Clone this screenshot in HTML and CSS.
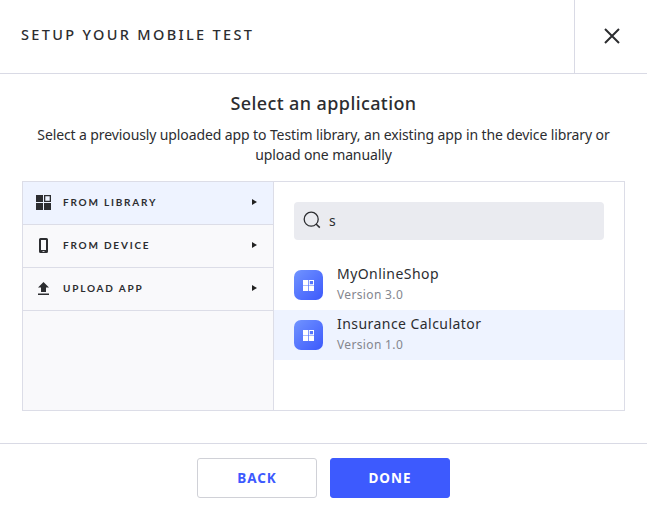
FILE: index.html
```html
<!DOCTYPE html>
<html lang="en">
<head>
<meta charset="utf-8">
<title>Setup your mobile test</title>
<link rel="stylesheet" href="styles.css">
</head>
<body>
<svg class="defs" width="0" height="0" aria-hidden="true">
  <symbol id="tiles" viewBox="0 0 15 15">
    <path fill="currentColor" fill-rule="evenodd" d="M0 0h7v7H0zM8 0h7v7H8zM9.3 1.3v4.4h4.4V1.3zM0 8h7v7H0zM8 8h7v7H8z"/>
  </symbol>
</svg>
<div class="dialog">
  <header class="header">
    <h1 class="heading"><span>SETUP YOUR MOBILE TEST</span></h1>
    <button class="close" aria-label="Close">
      <svg width="16" height="16" viewBox="0 0 16 16"><path d="M1 1l14 14M15 1L1 15" stroke="currentColor" stroke-width="2"/></svg>
    </button>
  </header>
  <main class="content">
    <h2 class="title"><span>Select an application</span></h2>
    <p class="description"><span>Select a previously uploaded app to Testim library, an existing app in the device library or</span><br><span>upload one manually</span></p>
    <section class="panel">
      <nav class="sources">
        <a class="source active"><svg class="icon" viewBox="0 0 15 15"><use href="#tiles"/></svg><span>FROM LIBRARY</span><i class="arrow"></i></a>
        <a class="source"><svg class="icon" viewBox="0 0 15 15"><path fill="currentColor" fill-rule="evenodd" d="M4.500 0h6Q12 0 12 1.500v12Q12 15 10.500 15h-6Q3 15 3 13.500v-12Q3 0 4.500 0zM5 2v10h5V2zM6.500 13v.8h2V13z"/></svg><span>FROM DEVICE</span><i class="arrow"></i></a>
        <a class="source"><svg class="icon" viewBox="0 0 15 15"><path fill="currentColor" d="M7.500 1L13 6.600H10V11H5V6.600H2zM2 12.400h11V14H2z"/></svg><span>UPLOAD APP</span><i class="arrow"></i></a>
      </nav>
      <div class="library">
        <label class="search">
          <svg width="18" height="18" viewBox="0 0 18 18"><circle cx="8.200" cy="8.200" r="7" fill="none" stroke="currentColor" stroke-width="1.300"/><path d="M13 13l3.800 3.600" stroke="currentColor" stroke-width="1.500"/></svg>
          <span>s</span>
        </label>
        <ul class="apps">
          <li class="app">
            <div class="badge"><svg width="11" height="11"><use href="#tiles"/></svg></div>
            <div class="info"><div class="name"><span>MyOnlineShop</span></div><div class="version"><span>Version 3.0</span></div></div>
          </li>
          <li class="app selected">
            <div class="badge"><svg width="11" height="11"><use href="#tiles"/></svg></div>
            <div class="info"><div class="name"><span>Insurance Calculator</span></div><div class="version"><span>Version 1.0</span></div></div>
          </li>
        </ul>
      </div>
    </section>
  </main>
  <footer class="footer">
    <button class="button"><span>BACK</span></button>
    <button class="button primary"><span>DONE</span></button>
  </footer>
</div>
</body>
</html>
```
FILE: styles.css
```css
* { box-sizing: border-box; }
body { margin: 0; background: #fff; color: #2c2d30; font-family: "Noto Sans", sans-serif; }
h1, h2, p, ul { margin: 0; padding: 0; }
button { padding: 0; background: none; border: 0; color: inherit; }
.defs { display: block; }
.dialog { display: flex; flex-direction: column; width: 647px; height: 512px; overflow: hidden; }
.header { display: flex; height: 74px; border-bottom: 1px solid #d9dae5; }
.heading { flex: 1; padding: 24px 0 0 21px; font-size: 14.5px; font-weight: 500; line-height: 20px; letter-spacing: 2.33px; }
.close { display: flex; align-items: center; justify-content: center; width: 73px; border-left: 1px solid #d9dae5; padding: 0 0 2px 1px; }
.content { height: 369px; padding: 17px 22px 0; }
.title { font-size: 18px; line-height: 24px; font-weight: 500; letter-spacing: .4px; text-align: center; white-space: nowrap; }
.description { margin-top: 10px; font-size: 14px; line-height: 20px; letter-spacing: -.11px; text-align: center; white-space: nowrap; }
.panel { display: flex; width: 603px; height: 230px; margin-top: 16px; border: 1px solid #dcdde7; }
.sources { width: 251px; background: #f9f9fb; border-right: 1px solid #dcdde7; }
.source { display: flex; align-items: center; height: 43px; padding: 0 16px 2px 13px; border-bottom: 1px solid #dcdde7; font: 700 10px/14px Lato, sans-serif; letter-spacing: 1.8px; }
.source.active { background: #eef3ff; }
.icon { width: 15px; height: 15px; margin-right: 12px; }
.arrow { margin-left: auto; border: solid transparent; border-width: 3px 0 3px 5px; border-left-color: #222; }
.library { flex: 1; padding-top: 20px; }
.search { display: flex; align-items: center; gap: 8px; height: 38px; margin: 0 20px; padding: 0 0 2px 9px; border-radius: 4px; background: #eaebf0; font-size: 14px; }
.apps { margin-top: 20px; list-style: none; }
.app { display: flex; height: 50px; padding-left: 20px; }
.app.selected { background: #eef3ff; }
.badge { display: flex; align-items: center; justify-content: center; width: 29px; height: 30px; margin: 10px 14px 0 0; border-radius: 7px; background: linear-gradient(135deg, #7194ff, #3c59fc); color: #fff; }
.name { margin-top: 4px; font-size: 14px; line-height: 20px; letter-spacing: .45px; }
.version { margin-top: 1px; font-size: 12px; line-height: 20px; letter-spacing: .35px; color: #84868e; }
.footer { display: flex; justify-content: center; gap: 13px; height: 69px; padding-top: 14px; border-top: 1px solid #d9dae5; }
.button { width: 120px; height: 40px; border: 1px solid #d0d1d7; border-radius: 3px; color: #3d5afe; font: 700 13.5px/20px "Noto Sans", sans-serif; letter-spacing: 1px; }
.button.primary { background: #3d5afe; border-color: #3d5afe; color: #fff; }
```
